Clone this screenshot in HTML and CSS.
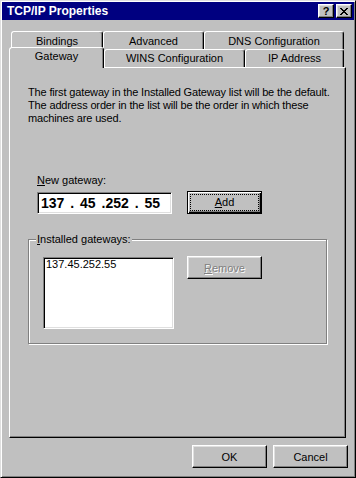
FILE: index.html
```html
<!DOCTYPE html>
<html lang="en">
<head>
    <meta charset="UTF-8">
    <title>TCP/IP Properties</title>
    <link rel="stylesheet" href="styles.css">
</head>
<body>
    <div class="window">
        <!-- Caption -->
        <div class="titlebar">
            <span class="title">TCP/IP Properties</span>
            <div class="caption-buttons">
                <button class="caption-btn help">?</button>
                <button class="caption-btn">
                    <svg width="8" height="7" viewBox="0 0 8 7" shape-rendering="crispEdges">
                        <path fill="#000" d="M0 0h2v1H0z M6 0h2v1H6z M1 1h2v1H1z M5 1h2v1H5z M2 2h4v1H2z M3 3h2v1H3z M2 4h4v1H2z M1 5h2v1H1z M5 5h2v1H5z M0 6h2v1H0z M6 6h2v1H6z"/>
                    </svg>
                </button>
            </div>
        </div>

        <!-- Tabs, two rows -->
        <div class="tabs">
            <div class="tab-row back">
                <div class="tab w-bindings">Bindings</div>
                <div class="tab w-advanced">Advanced</div>
                <div class="tab w-dns">DNS Configuration</div>
            </div>
            <div class="tab-row front">
                <div class="tab selected w-gateway">Gateway</div>
                <div class="tab w-wins">WINS Configuration</div>
                <div class="tab w-ip">IP Address</div>
            </div>
        </div>

        <div class="panel">
            <p class="intro">The first gateway in the Installed Gateway list will be the default.<br>The address order in the list will be the order in which these<br>machines are used.</p>

            <div class="new-gateway">
                <label class="field-label"><u>N</u>ew gateway:</label>
                <div class="field-row">
                    <div class="ip-field">137 . 45 .252 . 55</div>
                    <button class="btn default"><span class="focus"><u>A</u>dd</span></button>
                </div>
            </div>

            <fieldset class="group">
                <legend><u>I</u>nstalled gateways:</legend>
                <div class="group-row">
                    <div class="listbox">
                        <div class="list-item">137.45.252.55</div>
                    </div>
                    <button class="btn remove" disabled><u>R</u>emove</button>
                </div>
            </fieldset>
        </div>

        <div class="dialog-buttons">
            <button class="btn">OK</button>
            <button class="btn">Cancel</button>
        </div>
    </div>
</body>
</html>
```

FILE: styles.css
```css
body {
    margin: 0;
    font-family: "Liberation Sans", Arial, sans-serif;
    font-size: 11px;
    color: #000;
}

.window {
    width: 356px;
    height: 478px;
    box-sizing: border-box;
    background-color: #c0c0c0;
    border: 1px solid;
    border-color: #dfdfdf #000 #000 #dfdfdf;
    box-shadow: inset 1px 1px #fff, inset -1px -1px #808080;
    padding: 1px;
    display: flex;
    flex-direction: column;
}

/* caption */
.titlebar {
    height: 18px;
    background-color: #000080;
    display: flex;
    align-items: center;
    justify-content: space-between;
    padding: 0 2px 0 5px;
}

.title {
    color: #fff;
    font-weight: bold;
    font-size: 12px;
}

.caption-buttons {
    display: flex;
    gap: 2px;
}

.caption-btn {
    width: 16px;
    height: 14px;
    box-sizing: border-box;
    padding: 0;
    background-color: #c0c0c0;
    border: 1px solid;
    border-color: #fff #000 #000 #fff;
    box-shadow: inset -1px -1px #808080, inset 1px 1px #dfdfdf;
    display: flex;
    align-items: center;
    justify-content: center;
    font-family: "Liberation Sans", Arial, sans-serif;
    font-weight: bold;
    font-size: 11px;
    line-height: 11px;
    color: #000;
}

/* tabs */
.tabs {
    margin: 11px 0 0 9px;
}

.tab-row {
    display: flex;
    height: 18px;
}

.tab {
    box-sizing: border-box;
    height: 18px;
    border: 1px solid;
    border-bottom: 0;
    border-color: #fff #000 transparent #fff;
    border-radius: 3px 3px 0 0;
    box-shadow: inset -1px 0 #808080;
    background-color: #c0c0c0;
    text-align: center;
    line-height: 13px;
    padding-top: 3px;
}

.front .tab {
    padding-top: 2px;
}

.tab.selected {
    height: 21px;
    margin: -2px 0 0 -2px;
    position: relative;
    z-index: 1;
}

.w-bindings { width: 92px; }
.w-advanced { width: 101px; }
.w-dns { width: 140px; }
.w-gateway { width: 95px; }
.w-wins { width: 141px; }
.w-ip { width: 99px; }

/* tab page */
.panel {
    flex: 1;
    margin: 0 8px 0 7px;
    border: 1px solid;
    border-color: #fff #000 #000 #fff;
    box-shadow: inset -1px -1px #808080;
    padding: 18px 0 0 18px;
}

.intro {
    margin: 0;
    line-height: 13px;
    letter-spacing: -0.15px;
}

.new-gateway {
    margin: 49px 0 0 9px;
}

.field-label {
    display: block;
    line-height: 13px;
}

.field-row {
    display: flex;
    align-items: flex-end;
    gap: 15px;
    margin-top: 4px;
}

.ip-field {
    width: 135px;
    height: 22px;
    box-sizing: border-box;
    background-color: #fff;
    border: 1px solid;
    border-color: #808080 #fff #fff #808080;
    box-shadow: inset 1px 1px #000, inset -1px -1px #dfdfdf;
    padding-left: 3px;
    font-weight: bold;
    font-size: 14px;
    line-height: 20px;
    word-spacing: 2px;
    white-space: pre;
}

.btn {
    width: 75px;
    height: 23px;
    box-sizing: border-box;
    padding: 0;
    background-color: #c0c0c0;
    border: 1px solid;
    border-color: #fff #000 #000 #fff;
    box-shadow: inset -1px -1px #808080, inset 1px 1px #dfdfdf;
    font-family: "Liberation Sans", Arial, sans-serif;
    font-size: 11px;
    color: #000;
}

.btn.default {
    border-color: #000;
    box-shadow: inset 1px 1px #fff, inset -1px -1px #000, inset -2px -2px #808080;
}

.focus {
    display: block;
    margin: 0 2px;
    border: 1px dotted #000;
    line-height: 15px;
}

.btn:disabled {
    color: #808080;
    text-shadow: 1px 1px #fff;
}

/* group box */
.group {
    margin: 19px 0 0 0;
    width: 299px;
    box-sizing: border-box;
    padding: 11px 0 14px 7px;
    border: 1px solid #808080;
    box-shadow: inset 1px 1px #fff, 1px 1px #fff;
}

.group legend {
    padding: 0 1px;
    line-height: 13px;
    background-color: #c0c0c0;
}

.group-row {
    display: flex;
    align-items: flex-start;
    gap: 13px;
    margin-left: 7px;
}

.listbox {
    width: 131px;
    height: 72px;
    box-sizing: border-box;
    background-color: #fff;
    border: 1px solid;
    border-color: #808080 #fff #fff #808080;
    box-shadow: inset 1px 1px #000, inset -1px -1px #dfdfdf;
    padding: 0 2px;
}

.list-item {
    line-height: 13px;
}

.remove {
    margin-top: -1px;
}

.dialog-buttons {
    display: flex;
    justify-content: flex-end;
    gap: 6px;
    margin-top: 7px;
    padding: 0 6px 8px 0;
}
```
